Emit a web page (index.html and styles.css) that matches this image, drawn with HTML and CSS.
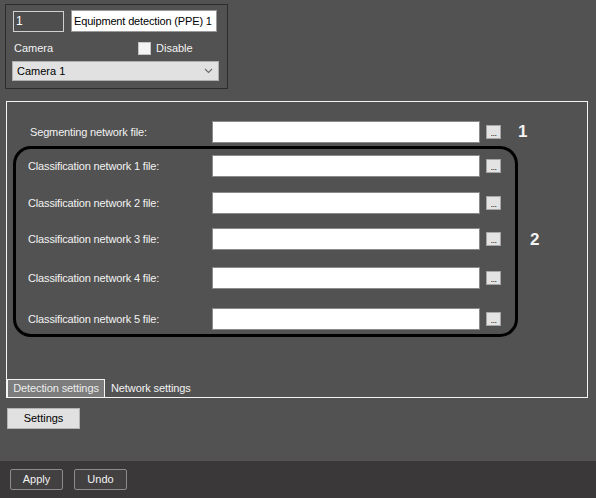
FILE: index.html
```html
<!DOCTYPE html>
<html>
<head>
<meta charset="utf-8">
<link rel="stylesheet" href="styles.css">
</head>
<body>
<div class="page">
  <div class="top-panel">
    <div class="tp-row1">
      <div class="id-field">1</div>
      <div class="name-field">Equipment detection (PPE) 1</div>
    </div>
    <div class="tp-row2">
      <span class="cam-label">Camera</span>
      <span class="checkbox"></span>
      <span class="disable-label">Disable</span>
    </div>
    <div class="select">
      <span>Camera 1</span>
      <svg class="chev" width="9" height="6" viewBox="0 0 9 6"><path d="M1 1 L4.5 4.5 L8 1" fill="none" stroke="#6a6a6a" stroke-width="1.1"/></svg>
    </div>
  </div>

  <div class="main-box">
    <div class="rows">
      <div class="row r0 seg">
        <span class="lbl">Segmenting network file:</span>
        <span class="inp"></span>
        <span class="dots">...</span>
      </div>
      <div class="row r1">
        <span class="lbl">Classification network 1 file:</span>
        <span class="inp"></span>
        <span class="dots">...</span>
      </div>
      <div class="row r2">
        <span class="lbl">Classification network 2 file:</span>
        <span class="inp"></span>
        <span class="dots">...</span>
      </div>
      <div class="row r3">
        <span class="lbl">Classification network 3 file:</span>
        <span class="inp"></span>
        <span class="dots">...</span>
      </div>
      <div class="row r4">
        <span class="lbl">Classification network 4 file:</span>
        <span class="inp"></span>
        <span class="dots">...</span>
      </div>
      <div class="row r5">
        <span class="lbl">Classification network 5 file:</span>
        <span class="inp"></span>
        <span class="dots">...</span>
      </div>
    </div>
    <div class="tabs">
      <div class="tab active">Detection settings</div>
      <div class="tab">Network settings</div>
    </div>
    <div class="group-outline"></div>
    <div class="num num1">1</div>
    <div class="num num2">2</div>
  </div>

  <div class="settings-btn">Settings</div>

  <div class="bottom-bar">
    <div class="dark-btn">Apply</div>
    <div class="dark-btn">Undo</div>
  </div>
</div>
</body>
</html>
```

FILE: styles.css
```css
html, body {
  margin: 0;
  padding: 0;
}
body {
  background: #525252;
  font-family: "Liberation Sans", Arial, sans-serif;
  font-size: 11px;
  color: #f2f2f2;
}
.page {
  width: 596px;
  height: 498px;
  display: flex;
  flex-direction: column;
  overflow: hidden;
}

/* top panel */
.top-panel {
  margin: 4px 0 0 5px;
  width: 221px;
  height: 83px;
  border: 1px solid #2c2c2c;
  display: flex;
  flex-direction: column;
}
.tp-row1 {
  display: flex;
  align-items: flex-start;
  margin-top: 5px;
  padding-left: 7px;
}
.id-field {
  width: 47px;
  height: 19px;
  margin-top: 1px;
  border: 1px solid #d0d0d0;
  background: #4e4e4e;
  color: #ffffff;
  font-size: 12px;
  line-height: 19px;
  padding-left: 2px;
}
.name-field {
  margin-left: 7px;
  width: 142px;
  height: 20px;
  border: 1px solid #9a9a9a;
  background: #ffffff;
  color: #000;
  font-size: 11px;
  letter-spacing: -0.15px;
  line-height: 20px;
  padding-left: 2px;
  white-space: nowrap;
  overflow: hidden;
}
.tp-row2 {
  display: flex;
  align-items: center;
  height: 14px;
  margin-top: 9px;
  padding-left: 8px;
}
.cam-label {
  width: 124px;
}
.checkbox {
  width: 11px;
  height: 11px;
  border: 1px solid #c4c4c4;
  background: #f3f3f3;
}
.disable-label {
  margin-left: 5px;
}
.select {
  margin: 6px 0 0 6px;
  width: 201px;
  height: 18px;
  border: 1px solid #b0b0b0;
  background: #e1e1e1;
  color: #000;
  display: flex;
  align-items: center;
  justify-content: space-between;
  padding-left: 4px;
}
.chev {
  margin-right: 5px;
}

/* main box */
.main-box {
  position: relative;
  margin: 12px 0 0 6px;
  width: 580px;
  height: 295px;
  border: 1px solid #f4f4f4;
  display: flex;
  flex-direction: column;
}
.rows {
  display: flex;
  flex-direction: column;
}
.row {
  display: grid;
  grid-template-columns: 199px 268px 15px;
  column-gap: 6px;
  align-items: center;
  height: 22px;
}
.row .lbl {
  padding-left: 21px;
  letter-spacing: -0.15px;
  white-space: nowrap;
}
.row.seg .lbl {
  padding-left: 23px;
}
.r0 { margin-top: 19px; }
.r1 { margin-top: 12px; }
.r2 { margin-top: 15px; }
.r3 { margin-top: 14px; }
.r4 { margin-top: 17px; }
.r5 { margin-top: 19px; }
.inp {
  height: 20px;
  border: 1px solid #8a8a8a;
  background: #ffffff;
}
.dots {
  box-sizing: border-box;
  width: 15px;
  height: 14px;
  border: 1px solid #a6a6a6;
  background: #e3e3e3;
  color: #111;
  font-size: 9px;
  line-height: 14px;
  text-align: center;
  letter-spacing: -0.5px;
}
.tabs {
  margin-top: auto;
  display: flex;
  align-items: flex-end;
  height: 18px;
}
.tab {
  height: 17px;
  line-height: 16px;
  padding: 0 6px;
  letter-spacing: -0.1px;
  white-space: nowrap;
}
.tab.active {
  box-sizing: border-box;
  width: 98px;
  height: 18px;
  border: 1px solid #f4f4f4;
  border-bottom: none;
  background: #7c7c7c;
  color: #ececec;
  text-align: center;
  padding: 0;
}
.group-outline {
  position: absolute;
  left: 6px;
  top: 44px;
  width: 499px;
  height: 185px;
  border: 3px solid #000;
  border-radius: 18px;
}
.num {
  position: absolute;
  font-weight: bold;
  font-size: 17px;
  line-height: 17px;
  color: #f4f4f4;
}
.num1 { left: 511px; top: 21px; }
.num2 { left: 523px; top: 129px; }

.settings-btn {
  margin: 10px 0 0 7px;
  box-sizing: border-box;
  width: 73px;
  height: 21px;
  border: 1px solid #b4b4b4;
  background: #e1e1e1;
  color: #000;
  text-align: center;
  line-height: 19px;
}

.bottom-bar {
  margin-top: auto;
  height: 37px;
  background: #3a3839;
  display: flex;
  gap: 11px;
  padding: 8px 0 0 10px;
  box-sizing: border-box;
}
.dark-btn {
  box-sizing: border-box;
  width: 53px;
  height: 21px;
  border: 1px solid #8c8c8c;
  border-radius: 2px;
  background: #424041;
  color: #f2f2f2;
  text-align: center;
  line-height: 19px;
}
```
